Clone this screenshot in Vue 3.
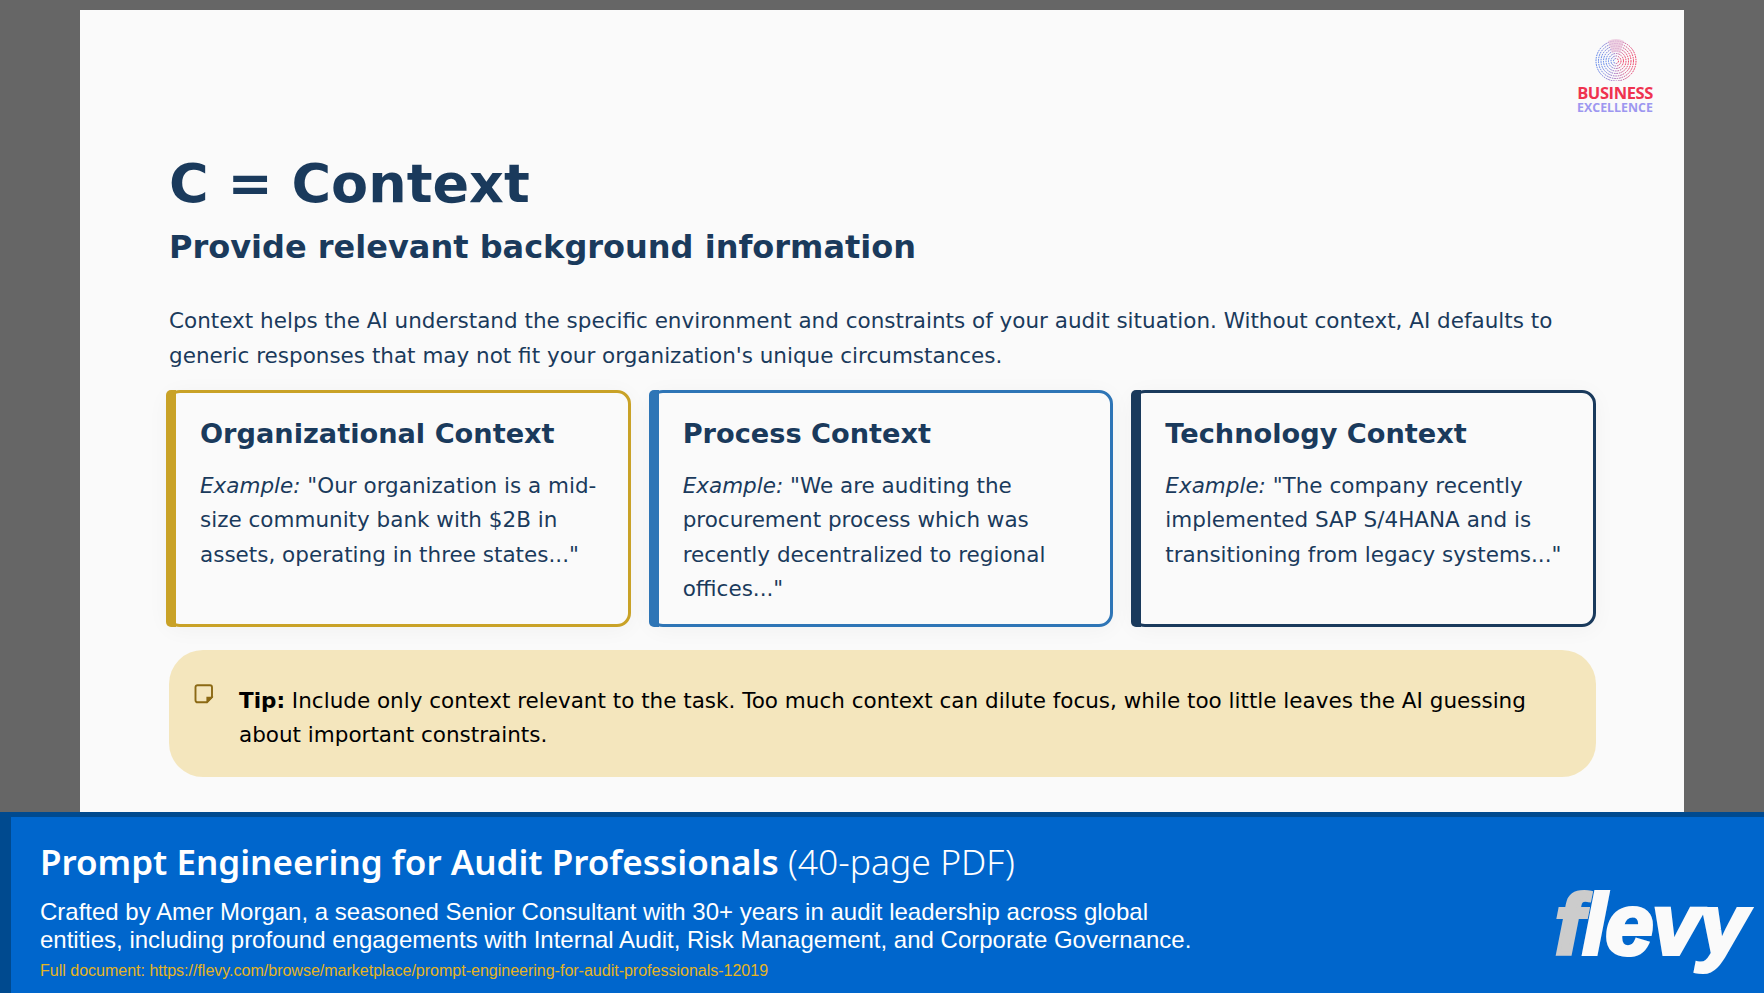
<template>
  <div class="page">
    <section class="slide">
      <div class="logo-row">
        <div class="logo">
          <svg class="globe" width="44" height="44" viewBox="0 0 44 44" fill="none">
            <defs>
              <linearGradient id="lg" x1="0" y1="0" x2="1" y2="0">
                <stop offset="0" stop-color="#4d79e8" />
                <stop offset="0.5" stop-color="#a868b8" />
                <stop offset="1" stop-color="#ee2f58" />
              </linearGradient>
            </defs>
            <circle v-for="r in rings" :key="r" cx="22" cy="24" :r="r" stroke="url(#lg)" stroke-width="1" stroke-dasharray="1.6 0.9" />
            <path d="M14 4 Q22 0 30 4 L26 16 Q22 14 18 16 Z" fill="#e9c3da" opacity="0.75" />
          </svg>
          <div class="logo-a">BUSINESS</div>
          <div class="logo-b">EXCELLENCE</div>
        </div>
      </div>
      <div class="content">
        <h1>C = Context</h1>
        <h2>Provide relevant background information</h2>
        <p class="intro">Context helps the AI understand the specific environment and constraints of your audit situation. Without context, AI defaults to generic responses that may not fit your organization's unique circumstances.</p>
        <div class="cards">
          <article v-for="c in cards" :key="c.title" class="card" :class="c.cls">
            <h3>{{ c.title }}</h3>
            <p><em>Example:</em> {{ c.text }}</p>
          </article>
        </div>
        <div class="tip">
          <svg class="note" width="20" height="20" viewBox="0 0 20 20" fill="none">
            <path d="M3.5 1.2H16a2 2 0 0 1 2 2V13l-5 5.3H3.5a2 2 0 0 1-2-2V3.2a2 2 0 0 1 2-2Z" stroke="#8b6914" stroke-width="1.9" />
            <path d="M13 18V13.4H18Z" fill="#8b6914" stroke="#8b6914" stroke-width="1.2" />
          </svg>
          <p><strong>Tip:</strong> Include only context relevant to the task. Too much context can dilute focus, while too little leaves the AI guessing about important constraints.</p>
        </div>
      </div>
    </section>
    <footer class="banner">
      <div class="info">
        <div class="title"><b>Prompt Engineering for Audit Professionals</b> <span>(40-page PDF)</span></div>
        <div class="desc">Crafted by Amer Morgan, a seasoned Senior Consultant with 30+ years in audit leadership across global entities, including profound engagements with Internal Audit, Risk Management, and Corporate Governance.</div>
        <div class="link">Full document: https://flevy.com/browse/marketplace/prompt-engineering-for-audit-professionals-12019</div>
      </div>
      <div class="flevy"><span class="f">f</span><span>levy</span></div>
    </footer>
  </div>
</template>

<script setup>
const rings = [2.5, 5, 7.5, 10, 12.5, 15, 17.5, 20]
const cards = [
  { title: 'Organizational Context', cls: 'gold', text: '"Our organization is a mid-size community bank with $2B in assets, operating in three states..."' },
  { title: 'Process Context', cls: 'blue', text: '"We are auditing the procurement process which was recently decentralized to regional offices..."' },
  { title: 'Technology Context', cls: 'navy', text: '"The company recently implemented SAP S/4HANA and is transitioning from legacy systems..."' },
]
</script>

<style>
html, body { margin: 0; background: #666666; }
</style>

<style scoped>
.page {
  width: 1764px;
  height: 993px;
  overflow: hidden;
  background: #666666;
  display: flex;
  flex-direction: column;
  padding-top: 10px;
  box-sizing: border-box;
}
.slide {
  width: 1604px;
  height: 802px;
  margin-left: 80px;
  background: #fafafa;
  font-family: "DejaVu Sans", sans-serif;
  color: #1a3a5c;
  flex: none;
}
.logo-row { display: flex; justify-content: flex-end; padding: 27px 30px 0 0; height: 88px; }
.logo { width: 78px; display: flex; flex-direction: column; align-items: center; }
.globe { display: block; margin-left: 2px; }
.logo-a { font: 700 16.5px/14px "Open Sans", sans-serif; color: #ef3350; margin-top: 5px; letter-spacing: -0.4px; }
.logo-b { font: 700 12.4px/13px "Open Sans", sans-serif; color: #9d97f0; margin-top: 1px; }
.content { padding: 0 88px 0 89px; }
h1 { margin: 27px 0 0; font-size: 54px; line-height: 64px; font-weight: 700; }
h2 { margin: 12px 0 0; font-size: 32px; line-height: 38px; font-weight: 700; }
.intro { margin: 38px 0 0; font-size: 21.5px; line-height: 34.56px; }
.cards { display: grid; grid-template-columns: repeat(3, 1fr); gap: 18px; margin: 17px 0 0 -3px; }
.card {
  position: relative;
  height: 237px;
  box-sizing: border-box;
  border: 3px solid var(--c);
  border-radius: 14px;
  padding: 25px 20px 0 31px;
  background: #fafafa;
  box-shadow: 0 3px 22px rgba(0, 0, 0, 0.04);
}
.card::before {
  content: "";
  position: absolute;
  left: -3px;
  top: -3px;
  bottom: -3px;
  width: 10px;
  border-radius: 5px 0 0 5px;
  background: var(--c);
}
.gold { --c: #c9a227; }
.blue { --c: #2e75b6; }
.navy { --c: #1a3a5c; }
h3 { margin: 0; font-size: 27.2px; line-height: 32px; font-weight: 700; }
.card p { margin: 18.5px 0 0; font-size: 21.5px; line-height: 34.56px; }
.tip {
  margin-top: 23px;
  height: 127px;
  box-sizing: border-box;
  background: #f4e6bd;
  border-radius: 34px;
  display: flex;
  padding: 32px 40px 0 25px;
  color: #000;
}
.note { flex: none; margin: 2px 25px 0 0; }
.tip p { margin: 1.5px 0 0; font-size: 21.5px; line-height: 34.56px; }
.banner {
  flex: 1;
  min-height: 0;
  background: #0066cc;
  border-top: 5px solid #004a8f;
  border-left: 11px solid #004a8f;
  display: flex;
  justify-content: space-between;
  color: #fff;
  padding: 0 18px 0 29px;
}
.title { font-family: "Noto Sans", sans-serif; font-size: 35.5px; line-height: 44px; margin-top: 22px; white-space: nowrap; }
.title b { font-weight: 600; font-size: 35px; }
.title span { font-weight: 300; }
.desc { font-family: "Liberation Sans Narrow", "Liberation Sans", sans-serif; font-size: 24px; line-height: 28px; width: 1180px; margin-top: 14px; }
.link { font-family: "Liberation Sans", sans-serif; font-size: 16px; line-height: 20px; color: #e6b422; margin-top: 7px; }
.flevy {
  font: italic 900 86px/1 "Liberation Sans", sans-serif;
  color: #fafafa;
  -webkit-text-stroke: 4px #fafafa;
  letter-spacing: -1px;
  margin-top: 64px;
  white-space: nowrap;
}
.f { color: #cccccc; -webkit-text-stroke-color: #cccccc; }
</style>
